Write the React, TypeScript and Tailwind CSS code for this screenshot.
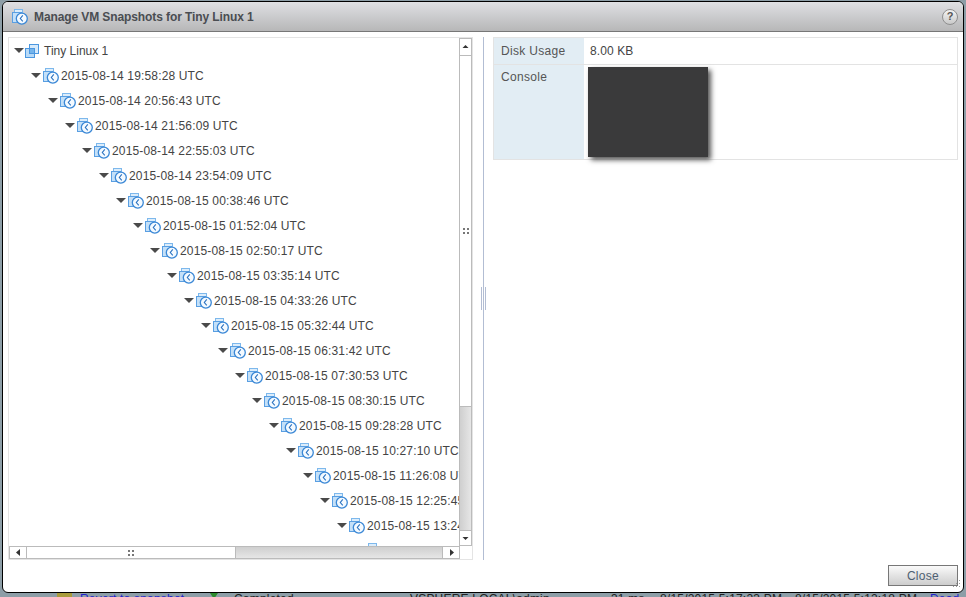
import React from "react";

const stamps = [
  "2015-08-14 19:58:28 UTC",
  "2015-08-14 20:56:43 UTC",
  "2015-08-14 21:56:09 UTC",
  "2015-08-14 22:55:03 UTC",
  "2015-08-14 23:54:09 UTC",
  "2015-08-15 00:38:46 UTC",
  "2015-08-15 01:52:04 UTC",
  "2015-08-15 02:50:17 UTC",
  "2015-08-15 03:35:14 UTC",
  "2015-08-15 04:33:26 UTC",
  "2015-08-15 05:32:44 UTC",
  "2015-08-15 06:31:42 UTC",
  "2015-08-15 07:30:53 UTC",
  "2015-08-15 08:30:15 UTC",
  "2015-08-15 09:28:28 UTC",
  "2015-08-15 10:27:10 UTC",
  "2015-08-15 11:26:08 UTC",
  "2015-08-15 12:25:45 UTC",
  "2015-08-15 13:24:33 UTC",
  "2015-08-15 14:23:11 UTC",
];

function SnapIcon({ size = 16 }: { size?: number }) {
  return (
    <svg width={size} height={size} viewBox="0 0 16 16" className="shrink-0">
      <rect x="2.5" y="0.5" width="8" height="8" fill="#dcedfb" stroke="#7db8ec" />
      <rect x="0.5" y="3.5" width="9" height="10" fill="#c4e0f8" stroke="#5a9fe2" />
      <circle cx="9.8" cy="9.6" r="5.5" fill="#f4faff" stroke="#3b88d6" strokeWidth="1.3" />
      <path d="M10.8 6.4 L8.3 9.5 L10.8 12.4" fill="none" stroke="#2a72c0" strokeWidth="1.1" />
    </svg>
  );
}

function VmIcon() {
  return (
    <svg width="14" height="14" viewBox="0 0 14 14" className="shrink-0">
      <rect x="4.5" y="0.5" width="9" height="9" fill="#d6eafb" stroke="#4b97e0" />
      <rect x="0.5" y="4.5" width="9" height="9" fill="#b8daf7" stroke="#4b97e0" />
      <rect x="4.5" y="4.5" width="5" height="5" fill="#74b4ec" stroke="#4b97e0" />
    </svg>
  );
}

function Tri({ dir }: { dir: "up" | "down" | "left" | "right" }) {
  const d = {
    up: "M0.5 4 L3.5 1 L6.5 4 Z",
    down: "M0.5 2 L3.5 5 L6.5 2 Z",
    left: "M5 0 L5 7 L1 3.5 Z",
    right: "M2 0 L2 7 L6 3.5 Z",
  }[dir];
  return (
    <svg width="7" height="7" viewBox="0 0 7 7">
      <path d={d} fill="#333" />
    </svg>
  );
}

function Grip() {
  return (
    <div className="grid grid-cols-2 gap-[2px]">
      <span className="w-[2px] h-[2px] bg-[#777]" />
      <span className="w-[2px] h-[2px] bg-[#777]" />
      <span className="w-[2px] h-[2px] bg-[#777]" />
      <span className="w-[2px] h-[2px] bg-[#777]" />
    </div>
  );
}

export default function App() {
  return (
    <div className="relative w-[966px] h-[597px] overflow-hidden bg-[#8d9ea7] font-['Liberation_Sans',Arial,sans-serif]">
      {/* page behind the dialog */}
      <div className="flex items-start h-[20px] mt-[592px] text-[12px] tracking-[0.2px] leading-[14px] text-[#222] whitespace-nowrap">
        <span className="ml-[57px] w-[15px] h-[12px] bg-[#a99c3c] shrink-0" />
        <span className="ml-[8px] w-[130px] text-[#2222cc]">Revert to snapshot</span>
        <span className="w-0 h-0 shrink-0 mt-[1px] border-x-[4px] border-x-transparent border-t-[6px] border-t-[#2e8b2e]" />
        <span className="ml-[16px] w-[176px]">Completed</span>
        <span className="w-[201px]">VSPHERE.LOCAL\admin</span>
        <span className="w-[49px]">31 ms</span>
        <span className="w-[135px]">8/15/2015 5:17:23 PM</span>
        <span className="w-[135px]">8/15/2015 5:12:18 PM</span>
        <span className="text-[#2222cc]">Dead</span>
      </div>

      {/* dialog */}
      <div className="absolute left-[2px] top-[1px] w-[962px] h-[592px] flex flex-col overflow-hidden rounded-[6px] border border-black bg-white">
        <div className="h-[30px] shrink-0 flex items-center pl-[9px] pr-[5px] border-b border-[#777] bg-gradient-to-b from-[#dfe0e3] to-[#b7b7b8]">
          <SnapIcon size={16} />
          <span className="ml-[6px] text-[12px] font-bold tracking-[-0.1px] text-[#4a4d52]">
            Manage VM Snapshots for Tiny Linux 1
          </span>
          <div className="ml-auto w-[16px] h-[16px] rounded-full border border-[#8f8f8f] bg-gradient-to-b from-[#f4f4f4] to-[#c9c9c9] flex items-center justify-center text-[11px] leading-none font-bold text-[#555]">
            ?
          </div>
        </div>

        <div className="flex-1 min-h-0 relative flex pl-[5px] pt-[5px] pr-[5px]">
          {/* left pane */}
          <div className="w-[465px] h-[523px] shrink-0 flex flex-col border border-[#e4e4e4]">
            <div className="flex flex-1 min-h-0">
              <div className="w-[451px] overflow-hidden text-[12px] tracking-[0.15px] text-[#444] whitespace-nowrap">
                <div className="flex items-center h-[25px] pl-[5px]">
                  <span className="w-0 h-0 border-x-[5px] border-x-transparent border-t-[5px] border-t-[#4a4a4a] mr-[1px] shrink-0" />
                  <VmIcon />
                  <span className="ml-[5px] tracking-normal">Tiny Linux 1</span>
                </div>
                {stamps.map((s, i) => (
                  <div key={s} className="flex items-center h-[25px]" style={{ paddingLeft: 22 + 17 * i }}>
                    <span className="w-0 h-0 border-x-[5px] border-x-transparent border-t-[5px] border-t-[#4a4a4a] mr-[2px] shrink-0" />
                    <SnapIcon />
                    <span className="ml-[2px]">{s}</span>
                  </div>
                ))}
              </div>
              {/* vertical scrollbar */}
              <div className="w-[13px] shrink-0 flex flex-col border-x border-[#bbb] bg-gradient-to-r from-[#cfcfcf] to-[#e6e6e6]">
                <div className="h-[18px] shrink-0 bg-white border-y border-[#bbb] flex items-center justify-center"><Tri dir="up" /></div>
                <div className="h-[351px] shrink-0 bg-white border-b border-[#bbb] flex items-center justify-center"><Grip /></div>
                <div className="flex-1" />
                <div className="h-[16px] shrink-0 bg-white border-y border-[#bbb] flex items-center justify-center"><Tri dir="down" /></div>
              </div>
            </div>
            {/* horizontal scrollbar */}
            <div className="h-[13px] shrink-0 flex">
              <div className="w-[451px] flex border-y border-[#bbb] bg-gradient-to-b from-[#cfcfcf] to-[#e6e6e6]">
                <div className="w-[18px] shrink-0 bg-white border-x border-[#bbb] flex items-center justify-center"><Tri dir="left" /></div>
                <div className="w-[209px] shrink-0 bg-white border-r border-[#bbb] flex items-center justify-center"><Grip /></div>
                <div className="flex-1" />
                <div className="w-[18px] shrink-0 bg-white border-x border-[#bbb] flex items-center justify-center"><Tri dir="right" /></div>
              </div>
            </div>
          </div>

          {/* splitter */}
          <div className="w-[20px] h-[523px] shrink-0 flex items-center justify-center">
            <div className="relative w-px h-full bg-[#b2bdd3]">
              <span className="absolute left-[-2px] top-[250px] w-px h-[23px] bg-[#b2bdd3]" />
              <span className="absolute left-[2px] top-[250px] w-px h-[23px] bg-[#b2bdd3]" />
            </div>
          </div>

          {/* right pane */}
          <div className="w-[465px] h-[123px] shrink-0 border border-[#e3e3e3] text-[12px] flex flex-col">
            <div className="h-[27px] shrink-0 flex border-b border-[#e3e3e3]">
              <div className="w-[90px] bg-[#e2edf4] pl-[7px] flex items-center tracking-[0.3px] text-[#555]">Disk Usage</div>
              <div className="pl-[6px] flex items-center tracking-[0.1px] text-[#444]">8.00 KB</div>
            </div>
            <div className="flex flex-1 min-h-0">
              <div className="w-[90px] bg-[#e2edf4] pl-[7px] pt-[5px] leading-[14px] tracking-[0.3px] text-[#555]">Console</div>
              <div className="pl-[4px] pt-[2px]">
                <div className="w-[120px] h-[90px] bg-[#3a3a3b] shadow-[3px_3px_5px_#555]" />
              </div>
            </div>
          </div>
        </div>

        {/* footer */}
        <div className="h-[27px] shrink-0 flex justify-end items-start pr-[5px] relative">
          <button className="w-[70px] h-[21px] border border-[#777] bg-gradient-to-b from-[#fafafa] to-[#cdcdcd] text-[12px] tracking-[0.3px] text-[#4e6072]">
            Close
          </button>
        </div>
        <div className="absolute right-[2px] bottom-[2px] w-[10px] h-[10px]">
          <svg width="10" height="10" viewBox="0 0 10 10">
            <g fill="#999">
              <rect x="8" y="0" width="1" height="1" />
              <rect x="5" y="3" width="1" height="1" />
              <rect x="8" y="3" width="1" height="1" />
              <rect x="2" y="6" width="1" height="1" />
              <rect x="5" y="6" width="1" height="1" />
              <rect x="8" y="6" width="1" height="1" />
            </g>
          </svg>
        </div>
      </div>
    </div>
  );
}
